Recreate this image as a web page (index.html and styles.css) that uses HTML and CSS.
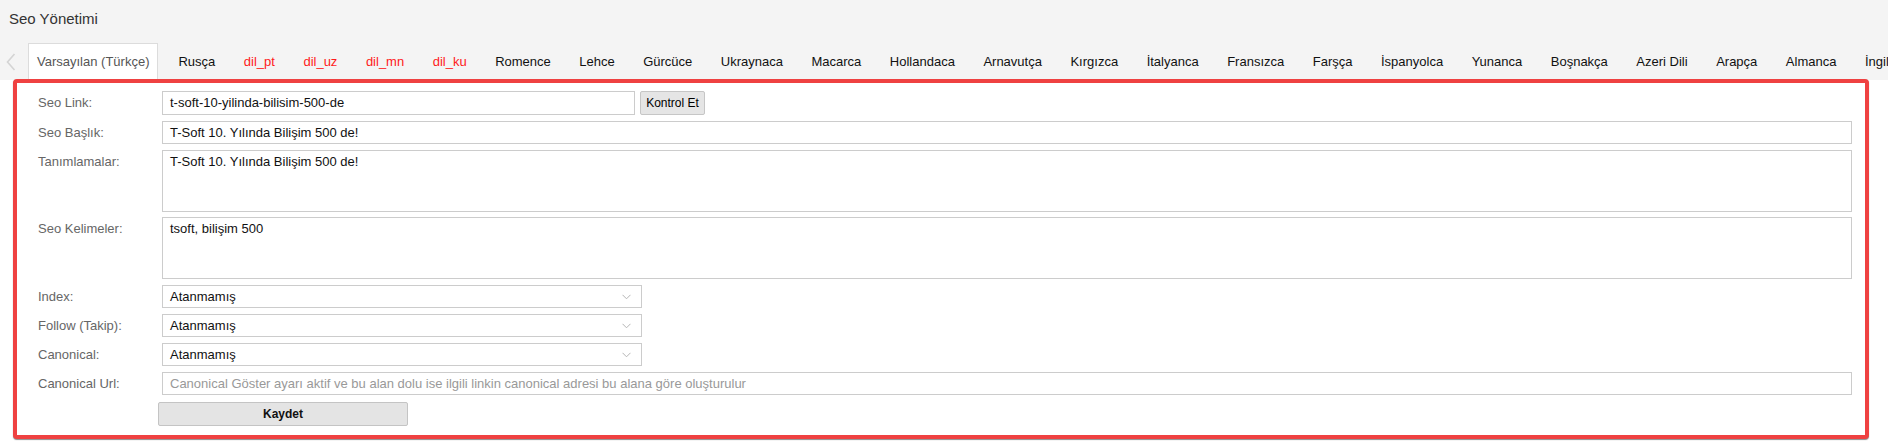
FILE: index.html
```html
<!DOCTYPE html>
<html lang="tr">
<head>
<meta charset="utf-8">
<title>Seo Yönetimi</title>
<link rel="stylesheet" href="styles.css">
</head>
<body>
<div class="header">
  <div class="title">Seo Yönetimi</div>
  <div class="tabbar">
    <div class="arrow">
      <svg width="10" height="18" viewBox="0 0 10 18"><path d="M8.5 1 L1.5 9 L8.5 17" fill="none" stroke="#d4d4d4" stroke-width="1.6"/></svg>
    </div>
    <ul class="tabs">
      <li class="tab active">Varsayılan (Türkçe)</li>
      <li class="tab">Rusça</li>
      <li class="tab red">dil_pt</li>
      <li class="tab red">dil_uz</li>
      <li class="tab red">dil_mn</li>
      <li class="tab red">dil_ku</li>
      <li class="tab">Romence</li>
      <li class="tab">Lehce</li>
      <li class="tab">Gürcüce</li>
      <li class="tab">Ukraynaca</li>
      <li class="tab">Macarca</li>
      <li class="tab">Hollandaca</li>
      <li class="tab">Arnavutça</li>
      <li class="tab">Kırgızca</li>
      <li class="tab">İtalyanca</li>
      <li class="tab">Fransızca</li>
      <li class="tab">Farşça</li>
      <li class="tab">İspanyolca</li>
      <li class="tab">Yunanca</li>
      <li class="tab">Boşnakça</li>
      <li class="tab">Azeri Dili</li>
      <li class="tab">Arapça</li>
      <li class="tab">Almanca</li>
      <li class="tab">İngilizce</li>
    </ul>
  </div>
</div>
<div class="panel">
  <div class="row">
    <label class="lbl">Seo Link:</label>
    <div class="field">
      <div class="input short">t-soft-10-yilinda-bilisim-500-de</div>
      <button class="btn-check">Kontrol Et</button>
    </div>
  </div>
  <div class="row">
    <label class="lbl">Seo Başlık:</label>
    <div class="field"><div class="input full h23">T-Soft 10. Yılında Bilişim 500 de!</div></div>
  </div>
  <div class="row gap5">
    <label class="lbl">Tanımlamalar:</label>
    <div class="field"><div class="textarea">T-Soft 10. Yılında Bilişim 500 de!</div></div>
  </div>
  <div class="row">
    <label class="lbl">Seo Kelimeler:</label>
    <div class="field"><div class="textarea">tsoft, bilişim 500</div></div>
  </div>
  <div class="row">
    <label class="lbl">Index:</label>
    <div class="field"><div class="select"><span>Atanmamış</span><svg width="9" height="6" viewBox="0 0 9 6"><path d="M0.5 0.8 L4.5 4.8 L8.5 0.8" fill="none" stroke="#b5b5b5" stroke-width="1"/></svg></div></div>
  </div>
  <div class="row">
    <label class="lbl">Follow (Takip):</label>
    <div class="field"><div class="select"><span>Atanmamış</span><svg width="9" height="6" viewBox="0 0 9 6"><path d="M0.5 0.8 L4.5 4.8 L8.5 0.8" fill="none" stroke="#b5b5b5" stroke-width="1"/></svg></div></div>
  </div>
  <div class="row">
    <label class="lbl">Canonical:</label>
    <div class="field"><div class="select"><span>Atanmamış</span><svg width="9" height="6" viewBox="0 0 9 6"><path d="M0.5 0.8 L4.5 4.8 L8.5 0.8" fill="none" stroke="#b5b5b5" stroke-width="1"/></svg></div></div>
  </div>
  <div class="row gap7">
    <label class="lbl">Canonical Url:</label>
    <div class="field"><div class="input full h23 placeholder">Canonical Göster ayarı aktif ve bu alan dolu ise ilgili linkin canonical adresi bu alana göre oluşturulur</div></div>
  </div>
  <div class="row last">
    <span class="lbl"></span>
    <div class="field"><button class="btn-save">Kaydet</button></div>
  </div>
</div>
</body>
</html>
```

FILE: styles.css
```css
* { box-sizing: border-box; }
html, body { margin: 0; padding: 0; background: #fff; }
body {
  font-family: "Liberation Sans", Arial, sans-serif;
  font-size: 13px;
  color: #000;
  width: 1888px;
  height: 444px;
  overflow: hidden;
}
.header {
  background: #f4f4f4;
  height: 80px;
  padding-top: 10px;
  overflow: hidden;
}
.title {
  font-size: 15px;
  line-height: 17px;
  color: #333;
  padding-left: 9px;
}
.tabbar {
  display: flex;
  margin-top: 16px;
  height: 37px;
}
.arrow {
  width: 28px;
  flex: none;
  display: flex;
  padding: 10px 0 0 6px;
}
.tabs {
  display: flex;
  list-style: none;
  margin: 0;
  padding: 0;
  white-space: nowrap;
}
.tab {
  flex: none;
  height: 37px;
  line-height: 36px;
  padding: 0 8px;
  margin-right: 10.5px;
  border: 1px solid transparent;
  border-bottom: none;
  color: #111;
}
.tab.active {
  background: #fff;
  border-color: #dcdcdc;
  color: #555;
  margin-right: 11px;
}
.tab.red { color: #ff1a1a; }

.panel {
  margin: -1px 19px 0 13px;
  height: 360px;
  border: 4px solid #ef4141;
  border-radius: 4px;
  box-shadow: 0 1px 1px rgba(0,0,0,0.45);
  background: #fff;
  padding: 8px 13px 9px 21px;
  position: relative;
}
.row {
  display: flex;
  align-items: flex-start;
  margin-bottom: 6px;
}
.row.gap5 { margin-bottom: 5px; }
.row.gap7 { margin-bottom: 7px; }
.row.last { margin-bottom: 0; }
.lbl {
  width: 124px;
  flex: none;
  line-height: 23px;
  color: #666;
}
.field {
  flex: 1;
  display: flex;
  align-items: flex-start;
  min-width: 0;
}
.input {
  height: 24px;
  line-height: 22px;
  border: 1px solid #cccccc;
  padding: 0 7px;
  background: #fff;
  color: #111;
  white-space: nowrap;
  overflow: hidden;
}
.input.h23 { height: 23px; line-height: 21px; }
.input.short { width: 473px; }
.input.full { flex: 1; }
.input.placeholder { color: #999; }
.btn-check {
  margin-left: 5px;
  width: 65px;
  height: 24px;
  padding: 0;
  font-family: "Liberation Sans", Arial, sans-serif;
  font-size: 12px;
  color: #000;
  background: #e5e5e5;
  border: 1px solid #c6c6c6;
  border-radius: 2px;
}
.textarea {
  flex: 1;
  height: 62px;
  border: 1px solid #cccccc;
  padding: 3px 7px;
  line-height: 15px;
  color: #111;
}
.select {
  width: 480px;
  height: 23px;
  border: 1px solid #cccccc;
  padding: 0 10px 0 7px;
  display: flex;
  align-items: center;
  justify-content: space-between;
  color: #111;
  background: #fff;
}
.btn-save {
  margin-left: -4px;
  width: 250px;
  height: 24px;
  padding: 0;
  font-family: "Liberation Sans", Arial, sans-serif;
  font-size: 12px;
  font-weight: bold;
  color: #111;
  background: #e4e4e4;
  border: 1px solid #c4c4c4;
  border-radius: 2px;
}
```
